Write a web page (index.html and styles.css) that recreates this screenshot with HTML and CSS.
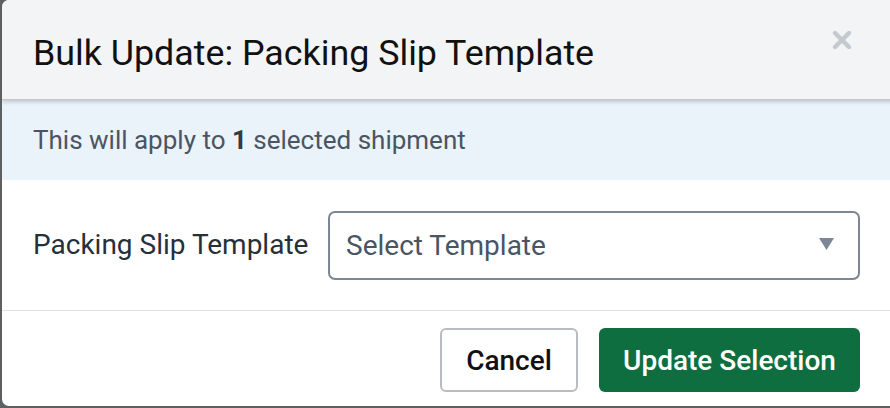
FILE: index.html
```html
<!DOCTYPE html>
<html lang="en">
<head>
<meta charset="utf-8">
<title>Bulk Update</title>
<link rel="stylesheet" href="styles.css">
</head>
<body>
<div class="dialog">
  <header class="dialog-header">
    <h1 class="dialog-title">Bulk Update: Packing Slip Template</h1>
    <button class="close-btn" aria-label="Close">
      <svg width="22" height="22" viewBox="0 0 22 22"><path d="M4 4 L18 18 M18 4 L4 18" stroke="#c4c9d0" stroke-width="4.4" stroke-linecap="round"/></svg>
    </button>
  </header>
  <div class="notice">This will apply to&nbsp;<strong>1</strong>&nbsp;selected shipment</div>
  <div class="dialog-body">
    <label class="field-label">Packing Slip Template</label>
    <div class="select">
      <span class="select-text">Select Template</span>
      <svg class="caret" width="15" height="12" viewBox="0 0 15 12"><path d="M0 0 H15 L7.5 12 Z" fill="#7b8794"/></svg>
    </div>
  </div>
  <footer class="dialog-footer">
    <button class="btn btn-cancel">Cancel</button>
    <button class="btn btn-primary">Update Selection</button>
  </footer>
</div>
</body>
</html>
```
FILE: styles.css
```css
html, body {
  margin: 0;
  padding: 0;
  height: 100%;
  overflow: hidden;
}
body {
  background: #5e5f61;
  font-family: Roboto, "Liberation Sans", sans-serif;
}
.dialog {
  margin-left: 2px;
  width: 900px;
  height: 406px;
  background: #fff;
  border-radius: 7px;
  overflow: hidden;
  display: flex;
  flex-direction: column;
}
.dialog-header {
  height: 100px;
  flex: none;
  background: #f3f4f6;
  display: flex;
  align-items: flex-start;
  justify-content: space-between;
  box-sizing: border-box;
  border-bottom: 1px solid #c2c7cc;
  box-shadow: 0 2px 4px rgba(0,0,0,0.18);
  position: relative;
  z-index: 1;
}
.dialog-title {
  margin: 32px 0 0 31px;
  font-size: 35.8px;
  font-weight: 400;
  color: #111;
  line-height: 42px;
}
.close-btn {
  margin: 29px 49px 0 0;
  padding: 0;
  border: 0;
  background: none;
  width: 22px;
  height: 22px;
  display: flex;
}
.notice {
  height: 80px;
  flex: none;
  box-sizing: border-box;
  background: #eaf2fa;
  color: #4a5563;
  font-size: 26px;
  padding-left: 31px;
  display: flex;
  align-items: center;
}
.notice strong {
  color: #333a44;
  font-weight: 700;
}
.dialog-body {
  height: 131px;
  flex: none;
  box-sizing: border-box;
  display: flex;
  align-items: center;
  padding: 0 0 0 31px;
  border-bottom: 1px solid #dfe3e6;
}
.field-label {
  font-size: 28px;
  color: #27303a;
  width: 295px;
  flex: none;
  padding-bottom: 2px;
}
.select {
  width: 532px;
  height: 69px;
  box-sizing: border-box;
  border: 2px solid #7b8794;
  border-radius: 7px;
  display: flex;
  align-items: center;
  justify-content: space-between;
  padding: 0 24px 0 16px;
}
.select-text {
  font-size: 28px;
  color: #4a5563;
}
.caret {
  margin-top: -2px;
}
.dialog-footer {
  flex: 1;
  display: flex;
  justify-content: flex-start;
  align-items: flex-start;
  padding: 17px 0 0 438px;
  gap: 21px;
}
.btn {
  height: 64px;
  border-radius: 6px;
  font-family: Roboto, "Liberation Sans", sans-serif;
  font-size: 28px;
  font-weight: 500;
  cursor: pointer;
}
.btn-cancel {
  width: 138px;
  background: #fff;
  border: 2px solid #b8bcc1;
  color: #111;
}
.btn-primary {
  width: 261px;
  background: #0f6e3f;
  border: 0;
  color: #fff;
}
```
